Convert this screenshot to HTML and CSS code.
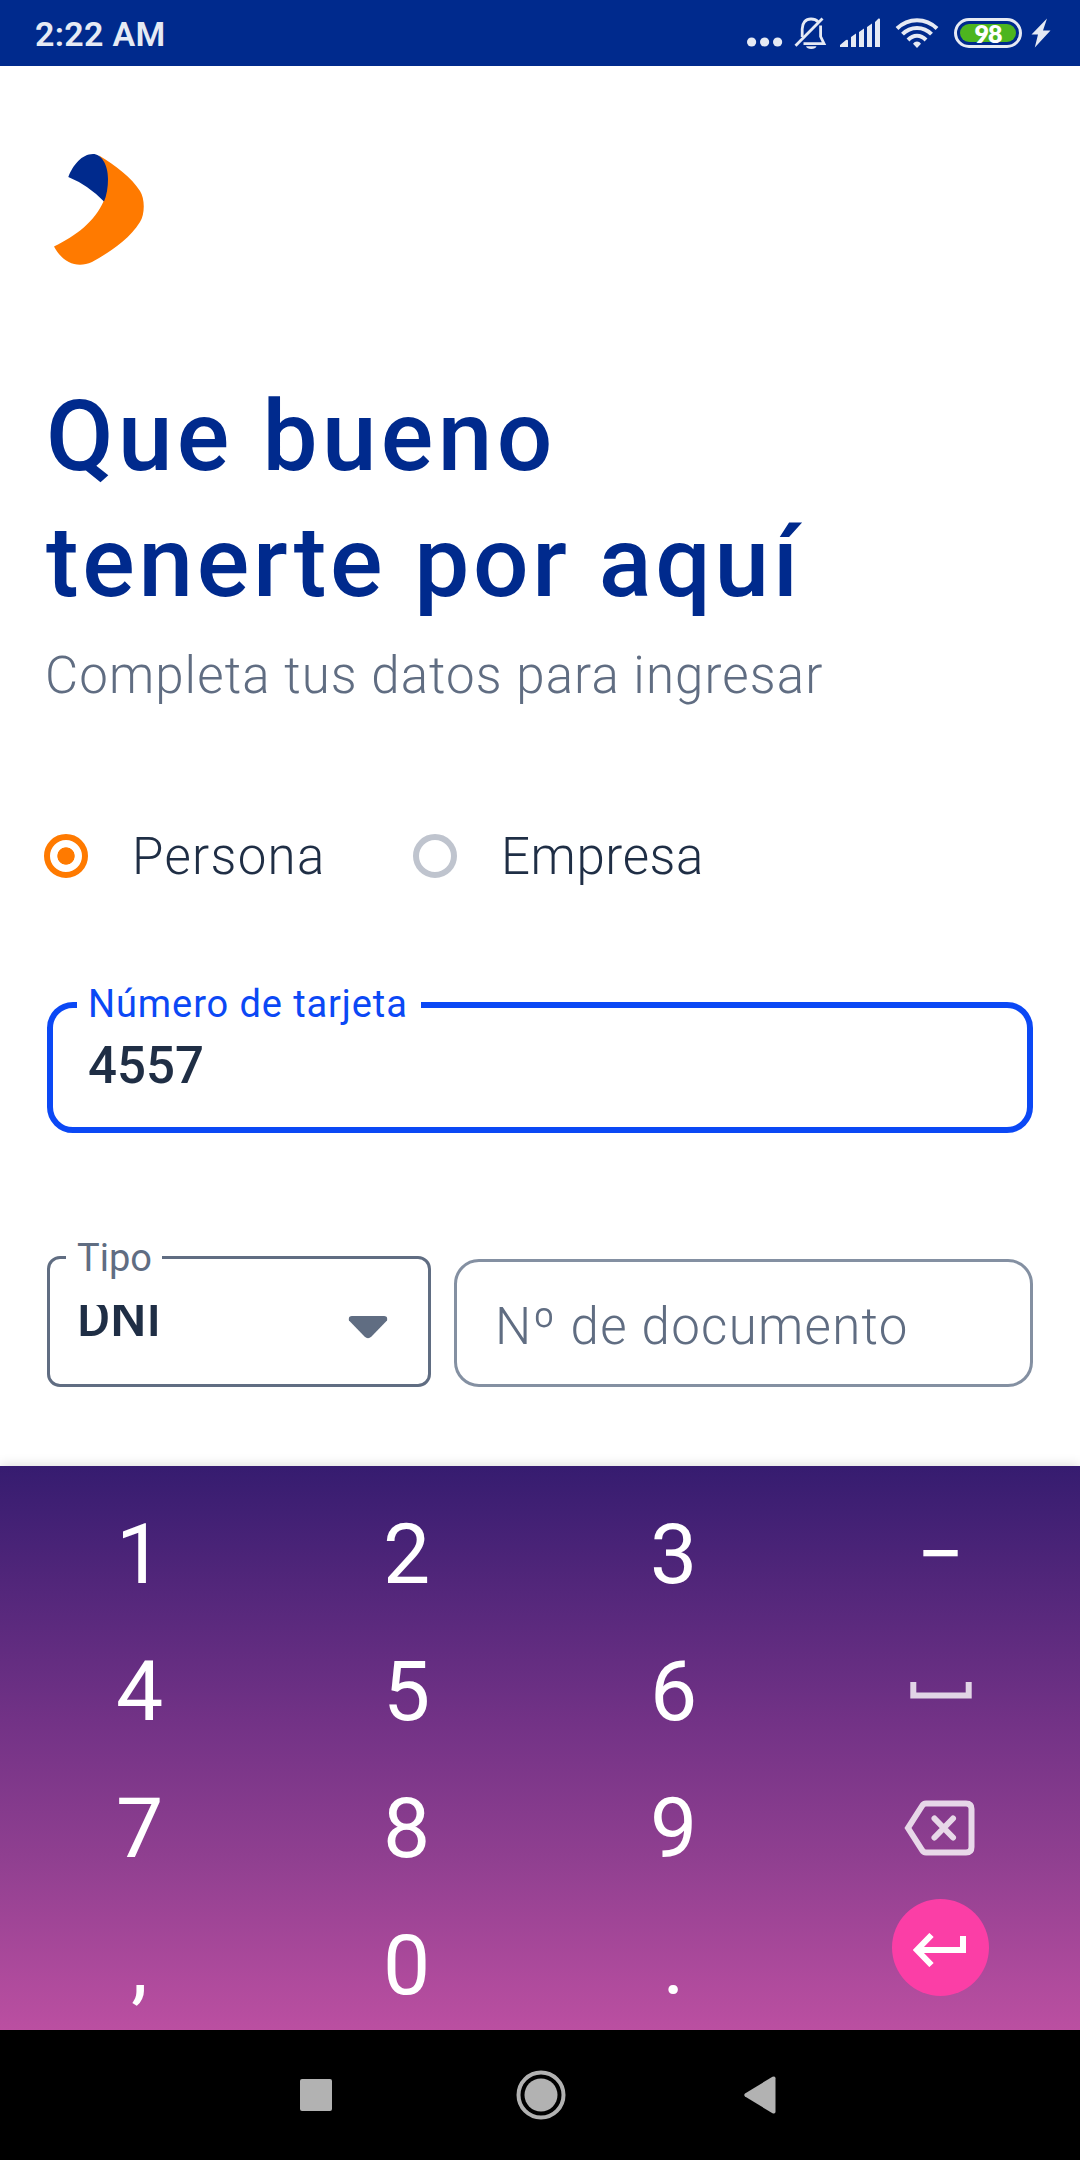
FILE: index.html
```html
<!DOCTYPE html>
<html lang="es">
<head>
<meta charset="utf-8">
<title>Ingreso</title>
<link rel="stylesheet" href="styles.css">
</head>
<body>
<div class="screen">
  <header class="status">
    <span class="clock">2:22 AM</span>
    <div class="status-icons">
      <svg class="dots" width="36" height="30" viewBox="0 0 36 30"><circle cx="4.6" cy="24" r="4.6"/><circle cx="17.6" cy="24" r="4.6"/><circle cx="30.6" cy="24" r="4.6"/></svg>
      <svg class="bell" width="33" height="33" viewBox="0 0 33 33"><g fill="none" stroke="#e6eaf4" stroke-width="2.8"><path d="M8.2 20V12C8.2 6 11.500 2 17 2q4.500 0 7 2.800"/><path d="M26.600 8.500V19.500L30 26.700H9.500"/><path d="M1.500 28.800L28.500 1.600"/></g><path d="M12 29.200h10.500a5.400 3.600 0 0 1-10.500 0z"/></svg>
      <svg class="signal" width="40" height="30" viewBox="0 0 40 30"><path d="M0 29v-2l6-5q2-1 2 1v6zM11 29V19l5-3.500V29zM19 29V14l5-3.500V29zM27 29V9l5-3.500V29zM35 29V4l3.500-3.500q1.500-.5 1.500 1V29z"/></svg>
      <svg class="wifi" width="44" height="32" viewBox="0 0 44 32"><g fill="none" stroke="#e6eaf4" stroke-width="4"><path d="M2 11.500Q10.500 3.200 22 3.200T42 11.500"/><path d="M7.500 17.200Q13.500 11 22 11T36.500 17.200"/><path d="M13 23Q17 18.800 22 18.800T31 23"/></g><path d="M22 24.500q2.500 0 4 2.200L22 31l-4-4.300q1.500-2.200 4-2.200z"/></svg>
      <div class="battery"><span class="level">98</span></div>
      <svg class="bolt" width="20" height="30" viewBox="0 0 20 30"><path d="M16 .5L.5 16.500H7L3.800 29.500L19.500 12.500H12z"/></svg>
    </div>
  </header>

  <main class="login">
    <svg class="logo" width="92" height="112" viewBox="0 0 92 112">
      <path fill="#ff7a00" d="M45 1.500C61 11 78 24 86 37C91 45 91 60 86 68C74 87 54 99 38 108C23 114.500 9 109 0 92.500C22 82 41 67 49.500 47.500L53 20z"/>
      <path fill="#002a8d" d="M14.300 23C19 11 28 0 39 0C47 0 54 10 54 25Q54 38 50 47.500Q34 31 14.300 23z"/>
    </svg>
    <h1 class="title"><span class="title-a">Que bueno</span><br><span class="title-b">tenerte por aquí</span></h1>
    <p class="subtitle">Completa tus datos para ingresar</p>

    <div class="radios">
      <div class="radio checked"><i class="ring"></i><span class="persona">Persona</span></div>
      <div class="radio"><i class="ring"></i><span class="empresa">Empresa</span></div>
    </div>

    <div class="field card"><span class="label">Número de tarjeta</span><span class="value">4557</span></div>

    <div class="row">
      <div class="field type">
        <span class="label">Tipo</span>
        <span class="value">DNI</span>
        <svg width="40" height="23" viewBox="0 0 40 23"><path d="M4 0h32q4 0 3 4.500L23.500 20.500q-3.500 3.500-7 0L1 4.500Q0 0 4 0z"/></svg>
      </div>
      <div class="field doc"><span class="placeholder">Nº de documento</span></div>
    </div>
  </main>

  <section class="keyboard">
    <div class="key">1</div><div class="key">2</div><div class="key">3</div><div class="key minus">−</div>
    <div class="key">4</div><div class="key">5</div><div class="key">6</div>
    <div class="key"><svg class="space" width="62" height="17" viewBox="0 0 62 17"><path d="M3.300 0V13.500H58.700V0"/></svg></div>
    <div class="key">7</div><div class="key">8</div><div class="key">9</div>
    <div class="key"><svg class="erase" width="72" height="56" viewBox="0 0 72 56"><path d="M22 3.500H62Q67.500 3.500 67.500 9V47Q67.500 52.500 62 52.500H22Q19.500 52.500 18 50L4 28L18 6Q19.500 3.500 22 3.500z"/><path stroke-linecap="round" d="M30.500 18.500l18.500 19M49 18.500l-18.500 19"/></svg></div>
    <div class="key">,</div><div class="key">0</div><div class="key">.</div>
    <div class="key"><span class="enter"><svg width="54" height="34" viewBox="0 0 54 34"><path d="M18.500 2L4 17L18.500 32M4 17H50V3"/></svg></span></div>
  </section>

  <nav class="navbar">
    <svg width="32" height="32" viewBox="0 0 32 32"><rect width="32" height="32" rx="2"/></svg>
    <svg class="home" width="50" height="50" viewBox="0 0 50 50"><circle cx="25" cy="25" r="16.500"/><circle cx="25" cy="25" r="22.500" fill="none" stroke="#b2b2b2" stroke-width="4"/></svg>
    <svg width="32" height="38" viewBox="0 0 32 38"><path d="M1 17.500L28.500 .7q3-1 3 1.500V35.800q0 2.500-3 1.500L1 20.500q-1.500-1.500 0-3z"/></svg>
  </nav>
</div>
</body>
</html>
```
FILE: styles.css
```css
* { box-sizing: border-box; }
body { margin: 0; background: #fff; font-family: Roboto, "Liberation Sans", sans-serif; }
svg { display: block; flex: none; }
.screen { width: 1080px; height: 2160px; display: flex; flex-direction: column; overflow: hidden; }

.status { height: 66px; flex: none; background: #002a8d; color: #e6eaf4; display: flex; justify-content: space-between; padding: 0 29px 0 35px; }
.clock { font-size: 34px; font-weight: 600; line-height: 68px; letter-spacing: .3px; white-space: nowrap; }
.status-icons { display: flex; align-items: flex-start; padding-top: 18px; fill: #e6eaf4; }
.bell { margin: -1px 0 0 11px; }
.signal { margin-left: 13px; }
.wifi { margin: -1px 0 0 15px; }
.battery { width: 68px; height: 30px; margin-left: 15px; border: 3px solid #e6eaf4; border-radius: 15px; padding: 3px; }
.level { display: block; height: 18px; border-radius: 9px; background: #4db51f; color: #fff; font: 800 25px/18px Lato, sans-serif; text-align: center; letter-spacing: -1px; }
.bolt { margin-left: 9px; }

.login { height: 1400px; flex: none; padding: 88px 47px 0; display: flex; flex-direction: column; }
.logo { margin-left: 7px; }
.title { margin: 108px 0 0 -1px; color: #002a8d; font-size: 98px; font-weight: 500; line-height: 126px; white-space: nowrap; }
.title-a { letter-spacing: 4.4px; }
.title-b { letter-spacing: 3.700px; }
.subtitle { margin: 20px 0 0 -2px; color: #606d82; font-size: 51px; font-weight: 300; line-height: 60px; letter-spacing: 1.100px; white-space: nowrap; }
.radios { display: flex; margin: 128px 0 0 -3px; color: #1f2e45; font-size: 51px; font-weight: 300; line-height: 46px; }
.persona { letter-spacing: 1.300px; }
.empresa { letter-spacing: .6px; }
.radio { width: 369px; height: 44px; display: flex; gap: 44px; }
.ring { width: 44px; height: 44px; flex: none; border: 6px solid #bfc4ce; border-radius: 50%; }
.checked .ring { border-color: #ff7a00; background: radial-gradient(circle, #ff7a00 8.300px, transparent 9px); }

.field { position: relative; display: flex; }
.label { position: absolute; background: #fff; font-size: 38px; font-weight: 450; line-height: 40px; white-space: nowrap; }
.value { color: #1f2e45; font-size: 51px; font-weight: 500; }
.card { height: 131px; margin-top: 124px; border: 6px solid #0b48f5; border-radius: 26px; }
.card .label { left: 24px; top: -24px; width: 344px; padding-left: 11px; color: #0b48f5; letter-spacing: .9px; }
.card .value { padding: 28px 0 0 35px; line-height: 60px; }
.row { display: flex; gap: 23px; margin-top: 123px; align-items: flex-end; }
.type { width: 384px; height: 131px; border: 3px solid #606d82; border-radius: 13px; }
.type .label { left: 16px; top: -21px; width: 96px; padding-left: 11px; color: #606d82; }
.type .value { height: 40px; margin: 46px 0 0 27px; line-height: 27px; overflow: hidden; }
.type svg { margin: 57px 40px 0 auto; fill: #606d82; }
.doc { flex: 1; height: 128px; border: 3px solid #8490a2; border-radius: 25px; }
.placeholder { padding: 35px 0 0 38px; color: #606d82; font-size: 51px; font-weight: 300; line-height: 60px; letter-spacing: 1.300px; white-space: nowrap; }

.keyboard { height: 564px; flex: none; padding: 16px 6px 0; display: grid; grid-template: repeat(4, 137px) / repeat(4, 267px); color: #fff; background: linear-gradient(#361c70, #723286 45%, #8f3f90 69%, #bb4fa1); box-shadow: 0 0 12px rgba(0, 0, 0, .16); }
.key { display: flex; justify-content: center; align-items: center; font-size: 84px; line-height: 100px; padding-top: 8px; }
.key svg { fill: none; stroke: rgba(255, 255, 255, .8); stroke-width: 6; margin-top: -2px; }
.key .erase { margin-right: 2px; }
.enter { width: 97px; height: 97px; margin-top: -36px; border-radius: 50%; background: #fb3ea6; display: flex; align-items: center; justify-content: center; }
.enter svg { stroke: #fff; margin: 4px 2px 0 0; }

.navbar { height: 130px; flex: none; background: #000; fill: #b2b2b2; display: flex; align-items: center; justify-content: space-between; padding: 0 304px 0 300px; }
.home { margin-left: 5px; }
```
